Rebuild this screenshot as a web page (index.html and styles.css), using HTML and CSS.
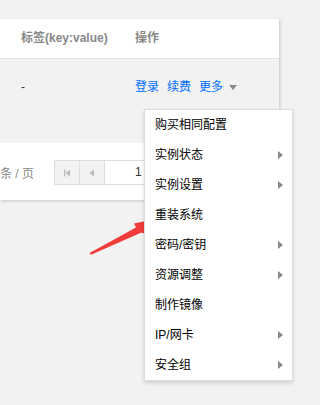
FILE: index.html
```html
<!DOCTYPE html>
<html lang="zh">
<head>
<meta charset="utf-8">
<link rel="stylesheet" href="styles.css">
</head>
<body>
<div class="page">
  <div class="card">
    <div class="thead">
      <div class="col-tag">标签(key:value)</div>
      <div class="col-op">操作</div>
    </div>
    <div class="trow">
      <div class="col-tag">-</div>
      <div class="col-op links">
        <a class="link">登录</a>
        <a class="link">续费</a>
        <a class="link">更多</a>
        <span class="caret"></span>
      </div>
    </div>
    <div class="pager">
      <span class="per">条 / 页</span>
      <div class="pbtns">
        <span class="pbtn"><svg width="8" height="8" viewBox="0 0 8 8"><rect x="1" y="0.5" width="1.3" height="7" fill="#bbb"/><path d="M7 0.5 L2.5 4 L7 7.5 Z" fill="#bbb"/></svg></span>
        <span class="pbtn"><svg width="8" height="8" viewBox="0 0 8 8"><path d="M6 0.5 L1.5 4 L6 7.5 Z" fill="#bbb"/></svg></span>
        <span class="pinput">1</span>
      </div>
    </div>
  </div>

  <svg class="red-arrow" width="299" height="405" viewBox="0 0 299 405">
    <polygon points="89.5,253 136,227.5 134,223.5 155,219 146.5,234.5 141.5,232.5 91,254.8" fill="#f23b3b"/>
  </svg>

  <ul class="menu">
    <li class="mi">购买相同配置</li>
    <li class="mi sub">实例状态</li>
    <li class="mi sub">实例设置</li>
    <li class="mi">重装系统</li>
    <li class="mi sub">密码/密钥</li>
    <li class="mi sub">资源调整</li>
    <li class="mi">制作镜像</li>
    <li class="mi sub">IP/网卡</li>
    <li class="mi sub">安全组</li>
  </ul>
</div>
</body>
</html>
```

FILE: styles.css
```css
html, body {
  margin: 0;
  padding: 0;
  background: #f2f2f2;
  font-family: "Liberation Sans", Arial, "Noto Sans CJK SC", sans-serif;
  font-size: 12px;
  color: #000;
}
.page {
  position: relative;
  width: 299px;
  height: 405px;
  overflow: hidden;
}
.card {
  margin-top: 19px;
  width: 279px;
  background: #fff;
  box-shadow: 1px 1px 3px rgba(0,0,0,0.18);
}
.thead {
  display: flex;
  height: 39px;
  line-height: 39px;
  border-bottom: 1px solid #e3e3e3;
  color: #888;
  font-weight: bold;
}
.col-tag {
  width: 114px;
  padding-left: 21px;
}
.col-op {
  flex: 1;
}
.trow {
  display: flex;
  height: 84px;
  box-sizing: border-box;
  padding-top: 19px;
  line-height: 18px;
  background: #f2f2f2;
  color: #333;
}
.links {
  display: flex;
  align-items: center;
  height: 18px;
  gap: 8px;
}
.link {
  color: #006eff;
}
.caret {
  width: 0;
  height: 0;
  border-left: 4px solid transparent;
  border-right: 4px solid transparent;
  border-top: 5px solid #888;
  margin-left: -2px;
  margin-top: 1px;
}
.pager {
  display: flex;
  align-items: center;
  height: 57px;
  box-sizing: border-box;
  padding-top: 2px;
  gap: 20px;
  color: #888;
}
.per {
  width: 34px;
  white-space: nowrap;
}
.pbtns {
  display: flex;
  height: 25px;
}
.pbtn {
  display: flex;
  align-items: center;
  justify-content: center;
  width: 24px;
  height: 23px;
  border: 1px solid #ddd;
  border-right: none;
  background: #f2f2f2;
}
.pinput {
  width: 100px;
  height: 23px;
  line-height: 23px;
  border: 1px solid #ddd;
  background: #fff;
  color: #333;
  padding-left: 30px;
}
.red-arrow {
  position: absolute;
  left: 0;
  top: 0;
  pointer-events: none;
}
.menu {
  position: absolute;
  left: 144px;
  top: 109px;
  width: 147px;
  margin: 0;
  padding: 0;
  list-style: none;
  background: #fff;
  border: 1px solid #ddd;
  box-shadow: 0 2px 4px rgba(0,0,0,0.15);
}
.mi {
  position: relative;
  height: 30px;
  line-height: 30px;
  padding-left: 10px;
  color: #000;
}
.mi.sub::after {
  content: "";
  position: absolute;
  right: 9px;
  top: 11px;
  border-top: 4px solid transparent;
  border-bottom: 4px solid transparent;
  border-left: 5px solid #888;
}
```
